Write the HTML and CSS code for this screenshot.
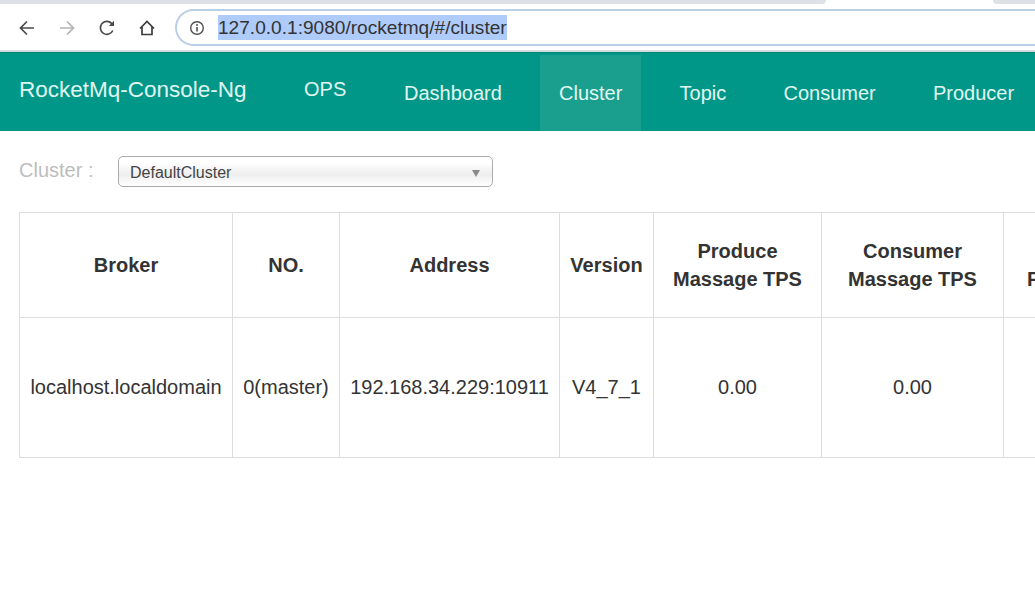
FILE: index.html
```html
<!DOCTYPE html>
<html lang="en">
<head>
<meta charset="utf-8">
<title>RocketMq-Console-Ng</title>
<link rel="stylesheet" href="styles.css">
</head>
<body>
<div class="tabstrip">
  <div class="tab-gray tab-left"></div>
  <div class="tab-gap"></div>
  <div class="tab-gray tab-right"></div>
</div>
<header class="toolbar">
  <svg class="tool" viewBox="0 0 20 20"><path d="M17 10H4M10 3.500 3.500 10l6.500 6.500" fill="none" stroke="#4a4a4a" stroke-width="1.700"/></svg>
  <svg class="tool" viewBox="0 0 20 20"><path d="M3 10h13M10 3.500 16.500 10 10 16.500" fill="none" stroke="#b4b4b4" stroke-width="1.700"/></svg>
  <svg class="tool" viewBox="0 0 20 20"><path d="M15.800 12.500A6.500 6.500 0 1 1 14.600 5.400L16.500 7.300" fill="none" stroke="#4a4a4a" stroke-width="1.700"/><path d="M17 2.800V8h-5.200z" fill="#4a4a4a"/></svg>
  <svg class="tool" viewBox="0 0 20 20"><path d="M3 10.500 10 3.500l7 7M5 9v7.500h10V9" fill="none" stroke="#3c3c3c" stroke-width="1.700"/></svg>
  <div class="omnibox">
    <svg class="info" viewBox="0 0 16 16"><circle cx="8" cy="8" r="6.300" fill="none" stroke="#505050" stroke-width="1.400"/><path d="M8 7v4.500" stroke="#505050" stroke-width="1.600"/><circle cx="8" cy="4.900" r="1" fill="#505050"/></svg>
    <span class="url">127.0.0.1:9080/rocketmq/#/cluster</span>
  </div>
</header>
<nav class="navbar">
  <a class="brand">RocketMq-Console-Ng</a>
  <a class="ops">OPS</a>
  <ul class="menu">
    <li class="menu-item">Dashboard</li>
    <li class="menu-item active">Cluster</li>
    <li class="menu-item">Topic</li>
    <li class="menu-item">Consumer</li>
    <li class="menu-item">Producer</li>
  </ul>
</nav>
<main class="content">
  <div class="filter">
    <span class="filter-label">Cluster :</span>
    <div class="select"><span>DefaultCluster</span><i class="caret"></i></div>
  </div>
  <table class="brokers">
    <colgroup>
      <col class="c1"><col class="c2"><col class="c3"><col class="c4"><col class="c5"><col class="c6"><col class="c7">
    </colgroup>
    <thead>
      <tr>
        <th>Broker</th><th>NO.</th><th>Address</th><th>Version</th><th>Produce<br>Massage TPS</th><th>Consumer<br>Massage TPS</th><th class="clip">&nbsp;<br>F</th>
      </tr>
    </thead>
    <tbody>
      <tr>
        <td>localhost.localdomain</td><td>0(master)</td><td>192.168.34.229:10911</td><td>V4_7_1</td><td>0.00</td><td>0.00</td><td class="clip"></td>
      </tr>
    </tbody>
  </table>
</main>
</body>
</html>
```
FILE: styles.css
```css
* { box-sizing: border-box; }
html, body { margin: 0; padding: 0; height: 100%; overflow: hidden; background: #fff; }
body { width: 1035px; height: 616px; font-family: "Liberation Sans", Arial, sans-serif; color: #333; }

.tabstrip { display: flex; height: 4px; background: #fff; }
.tab-gray { background: #dee1e6; height: 4px; }
.tab-left { width: 826px; border-bottom-right-radius: 5px; }
.tab-gap { width: 167px; }
.tab-right { flex: 1; border-bottom-left-radius: 5px; }

.toolbar { display: flex; align-items: center; height: 48px; padding: 5px 0 4px 17px; background: #fff; border-bottom: 2px solid #d6dbe2; }
.tool { width: 20px; height: 20px; margin-right: 20px; flex: none; }
.toolbar .tool:nth-of-type(4) { margin-right: 18px; }
.omnibox { flex: 1; height: 37px; display: flex; align-items: center; padding-left: 12px; border: 2px solid #b9cfe6; border-right: 0; border-radius: 19px 0 0 19px; }
.info { width: 16px; height: 16px; margin-right: 13px; flex: none; }
.url { font-size: 19.100px; line-height: 25px; color: #333; background: #aecbfa; }

.navbar { display: flex; height: 79px; background: #009688; color: #e0f7f1; border-top: 1px solid #00876f; }
.brand { font-size: 22.500px; width: 304px; padding: 22px 0 0 19px; line-height: 30px; }
.ops { font-size: 20px; width: 61px; padding-top: 21px; line-height: 30px; }
.menu { display: flex; gap: 19.700px; list-style: none; margin: 2px 0 0 0; padding: 0 0 0 20px; height: 76px; }
.menu-item { padding: 0 18.500px 0 19px; font-size: 20px; line-height: 76px; white-space: nowrap; }
.menu-item.active { background: #1a9e8e; }

.content { padding: 25px 0 0 19px; }
.filter { display: flex; align-items: center; height: 31px; margin-bottom: 25px; }
.filter-label { width: 99px; font-size: 20px; color: #bdbdbd; position: relative; top: -1px; }
.select { width: 375px; height: 31px; display: flex; align-items: center; justify-content: space-between; padding: 3px 12px 0 11px; border: 1px solid #aaa; border-radius: 5px; font-size: 16px; color: #444; background: linear-gradient(#fff 20%, #eee 60%, #fff 100%); }
.caret { width: 0; height: 0; border: 4.500px solid transparent; border-top: 7px solid #888; border-bottom: 0; }

.brokers { border-collapse: collapse; table-layout: fixed; width: 1080px; font-size: 20px; }
.c1 { width: 213px; } .c2 { width: 107px; } .c3 { width: 220px; } .c4 { width: 94px; } .c5 { width: 168px; } .c6 { width: 182px; } .c7 { width: 96px; }
.brokers th, .brokers td { border: 1px solid #ddd; text-align: center; padding: 0; white-space: nowrap; }
.brokers th { height: 105px; line-height: 28px; font-weight: bold; }
.brokers td { height: 140px; }
.clip { text-align: left !important; padding-left: 23px !important; }
```
